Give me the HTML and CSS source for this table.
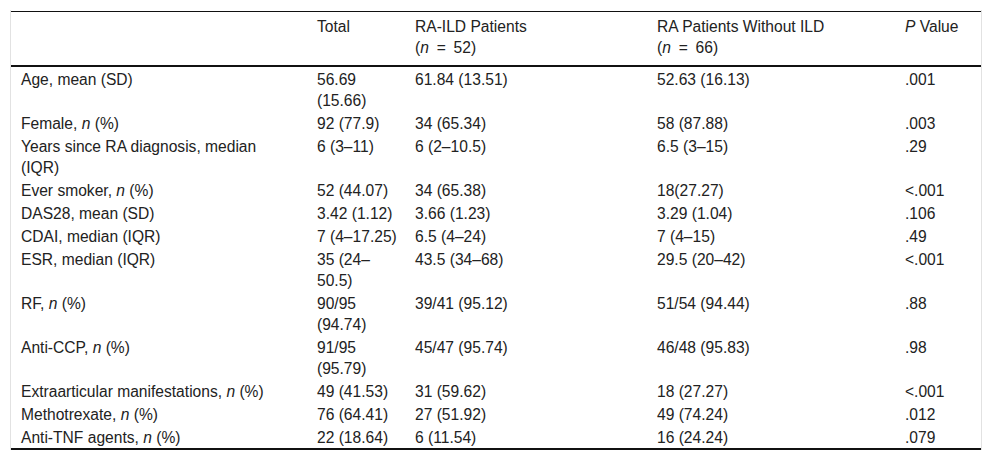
FILE: index.html
```html
<!DOCTYPE html>
<html lang="en">
<head>
<meta charset="utf-8">
<title>Table</title>
<link rel="stylesheet" href="styles.css">
</head>
<body>
<div class="wrap">
<table class="data">
<colgroup>
<col class="c1"><col class="c2"><col class="c3"><col class="c4"><col class="c5">
</colgroup>
<thead>
<tr>
<th></th>
<th>Total</th>
<th>RA-ILD Patients<br>(<i>n</i>&ensp;=&ensp;52)</th>
<th>RA Patients Without ILD<br>(<i>n</i>&ensp;=&ensp;66)</th>
<th><i>P</i> Value</th>
</tr>
</thead>
<tbody>
<tr><td>Age, mean (SD)</td><td>56.69 (15.66)</td><td>61.84 (13.51)</td><td>52.63 (16.13)</td><td>.001</td></tr>
<tr><td>Female, <i>n</i> (%)</td><td>92 (77.9)</td><td>34 (65.34)</td><td>58 (87.88)</td><td>.003</td></tr>
<tr><td>Years since RA diagnosis, median (IQR)</td><td>6 (3–11)</td><td>6 (2–10.5)</td><td>6.5 (3–15)</td><td>.29</td></tr>
<tr><td>Ever smoker, <i>n</i> (%)</td><td>52 (44.07)</td><td>34 (65.38)</td><td>18(27.27)</td><td>&lt;.001</td></tr>
<tr><td>DAS28, mean (SD)</td><td>3.42 (1.12)</td><td>3.66 (1.23)</td><td>3.29 (1.04)</td><td>.106</td></tr>
<tr><td>CDAI, median (IQR)</td><td>7 (4–17.25)</td><td>6.5 (4–24)</td><td>7 (4–15)</td><td>.49</td></tr>
<tr><td>ESR, median (IQR)</td><td>35 (24–50.5)</td><td>43.5 (34–68)</td><td>29.5 (20–42)</td><td>&lt;.001</td></tr>
<tr><td>RF, <i>n</i> (%)</td><td>90/95 (94.74)</td><td>39/41 (95.12)</td><td>51/54 (94.44)</td><td>.88</td></tr>
<tr><td>Anti-CCP, <i>n</i> (%)</td><td>91/95 (95.79)</td><td>45/47 (95.74)</td><td>46/48 (95.83)</td><td>.98</td></tr>
<tr><td>Extraarticular manifestations, <i>n</i> (%)</td><td>49 (41.53)</td><td>31 (59.62)</td><td>18 (27.27)</td><td>&lt;.001</td></tr>
<tr><td>Methotrexate, <i>n</i> (%)</td><td>76 (64.41)</td><td>27 (51.92)</td><td>49 (74.24)</td><td>.012</td></tr>
<tr><td>Anti-TNF agents, <i>n</i> (%)</td><td>22 (18.64)</td><td>6 (11.54)</td><td>16 (24.24)</td><td>.079</td></tr>
</tbody>
</table>
</div>
</body>
</html>
```

FILE: styles.css
```css
html, body {
  margin: 0;
  padding: 0;
  background: #fff;
}
body {
  font-family: "Liberation Sans", Arial, sans-serif;
  font-size: 15.6px;
  line-height: 21px;
  color: #222;
}
.wrap {
  margin: 10px 0 0 10px;
  width: 970px;
  padding-top: 1px;
  border-left: 1px solid #e2e2e2;
  border-right: 1px solid #e2e2e2;
}
.data {
  width: 970px;
  table-layout: fixed;
  border-collapse: collapse;
  border-top: 1px solid #111;
  border-bottom: 2px solid #111;
}
.c1 { width: 296px; }
.c2 { width: 98px; }
.c3 { width: 242px; }
.c4 { width: 248px; }
.c5 { width: 86px; }
.data th {
  font-weight: normal;
  text-align: left;
  vertical-align: top;
  padding: 4px 6px 7px 10px;
  border-bottom: 2px solid #111;
}
.data td {
  text-align: left;
  vertical-align: top;
  padding: 2px 6px 0 10px;
}
.data td:first-child {
  padding-right: 16px;
}
.data i {
  font-style: italic;
}
```
